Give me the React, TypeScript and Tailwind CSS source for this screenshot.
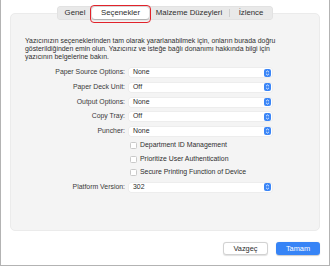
import React from "react";

const rows = [
  { label: "Paper Source Options:", value: "None" },
  { label: "Paper Deck Unit:", value: "Off" },
  { label: "Output Options:", value: "None" },
  { label: "Copy Tray:", value: "Off" },
  { label: "Puncher:", value: "None" },
];

const checks = [
  "Department ID Management",
  "Prioritize User Authentication",
  "Secure Printing Function of Device",
];

function Stepper() {
  return (
    <span className="flex h-[8px] w-[7px] items-center justify-center rounded-[2px] bg-[#3b86f7]">
      <svg width="5" height="6" viewBox="0 0 5 6" fill="none">
        <path d="M1 2.2 L2.5 0.9 L4 2.2" stroke="white" strokeWidth="0.8" />
        <path d="M1 3.8 L2.5 5.1 L4 3.8" stroke="white" strokeWidth="0.8" />
      </svg>
    </span>
  );
}

function Field({ value }: { value: string }) {
  return (
    <div className="flex h-[9px] w-[143px] items-center justify-between rounded-[2px] bg-white pl-[4px] pr-[1px] shadow-[0_0_0_0.5px_rgba(0,0,0,0.06)]">
      <span className="text-[6.9px] leading-none text-[#2b2b2b]">{value}</span>
      <Stepper />
    </div>
  );
}

function Row({ label, children, h }: { label: string; children: React.ReactNode; h: string }) {
  return (
    <div className={`flex items-center ${h}`}>
      <div className="w-[118px] pr-[4px] text-right text-[6.9px] leading-none text-[#3a3a3a]">
        {label}
      </div>
      {children}
    </div>
  );
}

export default function App() {
  return (
    <div className="relative h-[266px] w-[330px] border-x border-b border-[#b3b3b3] bg-white font-['Liberation_Sans',Arial,sans-serif]">
      {/* Tabs */}
      <div className="flex justify-center pt-[6px]">
        <div className="relative z-10 flex h-[14px] items-center rounded-[4px] bg-[#e9e9e9] p-[1px] text-[7.8px] leading-none text-[#2e2e2e] shadow-[inset_0_0_0_0.5px_rgba(0,0,0,0.06)]">
          <div className="flex h-full w-[34px] items-center justify-center">Genel</div>
          <div className="relative flex h-full w-[57px] items-center justify-center rounded-[3px] bg-white shadow-[0_0.5px_1.5px_rgba(0,0,0,0.25)]">
            Seçenekler
            <span className="absolute -left-[2px] -top-[2px] h-[18px] w-[61px] rounded-[4px] border-[1.5px] border-[#e1232b]" />
          </div>
          <div className="flex h-full w-[80px] items-center justify-center">Malzeme Düzeyleri</div>
          <div className="h-[8px] w-px bg-[#cfcfcf]" />
          <div className="flex h-full w-[42px] items-center justify-center">İzlence</div>
        </div>
      </div>

      {/* Panel */}
      <div className="mx-[9px] -mt-[7px] h-[218px] rounded-[5px] border border-[#ebebeb] bg-[#f4f4f4] pt-[23px]">
        <p className="pl-[14px] text-[6.9px] leading-[7.8px] text-[#2f2f2f]">
          Yazıcınızın seçeneklerinden tam olarak yararlanabilmek için, onların burada doğru
          <br />
          gösterildiğinden emin olun. Yazıcınız ve isteğe bağlı donanımı hakkında bilgi için
          <br />
          yazıcının belgelerine bakın.
        </p>

        <div className="mt-[5px] flex flex-col">
          {rows.map((r) => (
            <Row key={r.label} label={r.label} h="h-[14.7px]">
              <Field value={r.value} />
            </Row>
          ))}
          {checks.map((c) => (
            <Row key={c} label="" h="h-[13.6px]">
              <div className="flex items-center gap-[3px] pl-[1px]">
                <span className="h-[7px] w-[7px] rounded-[1.5px] border border-[#c9c9c9] bg-white" />
                <span className="text-[6.9px] leading-none text-[#2f2f2f]">{c}</span>
              </div>
            </Row>
          ))}
          <Row label="Platform Version:" h="h-[15px]">
            <Field value="302" />
          </Row>
        </div>
      </div>

      {/* Buttons */}
      <div className="mt-[11px] flex justify-end gap-[8px] pr-[9px]">
        <button className="flex h-[13px] w-[45px] items-center justify-center rounded-[3px] border border-[#d2d2d2] bg-white text-[7.4px] leading-none text-[#2b2b2b] shadow-[0_0.5px_1px_rgba(0,0,0,0.12)]">
          Vazgeç
        </button>
        <button className="flex h-[13px] w-[44px] items-center justify-center rounded-[3px] bg-[#3784f6] text-[7.4px] leading-none text-white shadow-[0_0.5px_1px_rgba(0,0,0,0.2)]">
          Tamam
        </button>
      </div>
    </div>
  );
}
